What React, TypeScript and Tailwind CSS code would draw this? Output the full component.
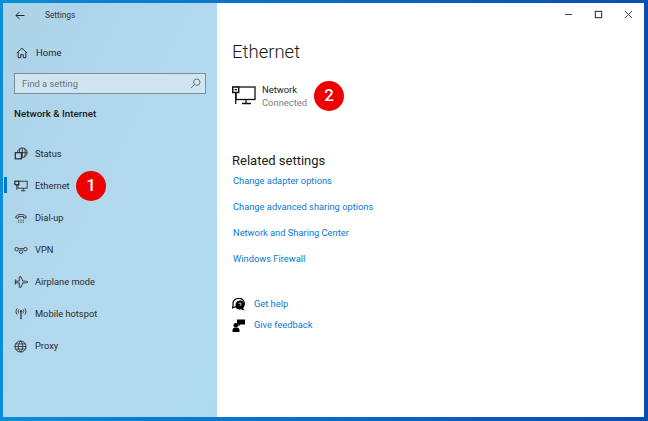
import React from "react";

const I = ({ children, w = 14, h = 14, sw = 1 }: { children: React.ReactNode; w?: number; h?: number; sw?: number }) => (
  <svg width={w} height={h} viewBox="0 0 16 16" fill="none" stroke="currentColor" strokeWidth={sw} className="shrink-0">
    {children}
  </svg>
);

const items: { label: string; icon: React.ReactNode; active?: boolean; badge?: boolean }[] = [
  {
    label: "Status",
    icon: (
      <I>
        <circle cx="9.500" cy="6.500" r="5.500" />
        <path d="M4 6.500h11M9.500 1v11M7 1.700c-1.200 3-1.200 6.600 0 9.600M12 1.700c1.200 3 1.200 6.600 0 9.600" />
        <rect x="1.500" y="6.500" width="7" height="7" fill="#b0d8ee" strokeWidth="1.400" />
      </I>
    ),
  },
  {
    label: "Ethernet",
    active: true,
    badge: true,
    icon: (
      <I>
        <rect x="4.500" y="2.500" width="10.500" height="8" />
        <path d="M8 13.500h5M10.500 10.500v3" />
        <rect x="1" y="2.500" width="4.500" height="4" fill="#b0d8ee" strokeWidth="1.400" />
        <path d="M3.200 6.500v6" />
      </I>
    ),
  },
  {
    label: "Dial-up",
    icon: (
      <I>
        <path d="M2 7c0-4 12-4 12 0v1h-3V6.400H5V8H2z" />
        <path d="M5 10.500h1M7.500 10.500h1M10 10.500h1M5 12.700h1M7.500 12.700h1M10 12.700h1" strokeWidth="1.400" />
      </I>
    ),
  },
  {
    label: "VPN",
    icon: (
      <I>
        <circle cx="3" cy="7" r="2" />
        <circle cx="13" cy="7" r="2" />
        <circle cx="8" cy="10" r="2" />
        <path d="M5 6.500h6" />
      </I>
    ),
  },
  {
    label: "Airplane mode",
    icon: (
      <I>
        <path d="M2 7h4V2h2l2 5h3.500c1.500 0 2.500 1 2.500 1s-1 1-2.500 1H10l-2 5H6V9H2z" />
        <path d="M1.500 5v6" />
      </I>
    ),
  },
  {
    label: "Mobile hotspot",
    icon: (
      <I>
        <path d="M8 6v8" strokeWidth="1.400" />
        <circle cx="8" cy="5" r="0.900" fill="currentColor" />
        <path d="M5.600 2.800c-1 1.300-1 3.200 0 4.500M10.400 2.800c1 1.300 1 3.200 0 4.500M3.600 1.500c-1.700 2.200-1.700 5 0 7.200M12.400 1.500c1.700 2.200 1.700 5 0 7.200" />
      </I>
    ),
  },
  {
    label: "Proxy",
    icon: (
      <I w={13} h={13}>
        <circle cx="8" cy="8" r="6.800" strokeWidth="1.200" />
        <path d="M1.200 8h13.600M2 4.800h12M2 11.200h12M8 1.200c-3.600 3.900-3.600 9.700 0 13.600M8 1.200c3.600 3.900 3.600 9.700 0 13.600" />
      </I>
    ),
  },
];

const Badge = ({ n }: { n: string }) => (
  <span className="absolute flex h-[30px] w-[30px] items-center justify-center rounded-full bg-[#ee0000] text-[17px] font-medium text-white">
    {n}
  </span>
);

export default function App() {
  return (
    <div
      className="flex h-[421px] w-[648px] overflow-hidden bg-gradient-to-r from-[#0a8ed8] via-[#0a6ac8] to-[#0a4cb4] pb-[4px] pl-[3px] pr-[4px] pt-[3px] text-[#1c1c1c]"
      style={{ fontFamily: 'Roboto,"Open Sans",sans-serif' }}
    >
      <aside className="flex w-[214px] shrink-0 flex-col bg-gradient-to-br from-[#acd2e8] via-[#b2d9ee] to-[#aedaf0]">
        <div className="flex h-[24px] items-center pl-[12px]">
          <svg width="10" height="9" viewBox="0 0 11 10" fill="none" stroke="#222" strokeWidth="1.100">
            <path d="M10.500 5H1M5 1 1 5l4 4" />
          </svg>
          <span className="ml-[20px] text-[8.300px] text-[#333]">Settings</span>
        </div>
        <div className="mt-[14px] flex h-[24px] items-center pl-[12.500px] text-[#222]">
          <svg width="12" height="12" viewBox="0 0 14 14" fill="none" stroke="currentColor" strokeWidth="1.100">
            <path d="M1 7 7 1.500 13 7M2.500 6v6.500h3V9h3v3.500h3V6" />
          </svg>
          <span className="ml-[8.500px] text-[9.500px]">Home</span>
        </div>
        <div className="ml-[11px] mt-[8px] flex h-[21px] w-[192px] items-center justify-between border-[1.500px] border-[#7b8e9b] bg-[#cfe6f2] pl-[7px] pr-[4px]">
          <span className="text-[9.300px] text-[#66747e]">Find a setting</span>
          <svg width="11" height="11" viewBox="0 0 11 11" fill="none" stroke="#66747e" strokeWidth="1">
            <circle cx="6.800" cy="4.200" r="3.200" />
            <path d="M4.500 6.500 1 10" />
          </svg>
        </div>
        <div className="ml-[11px] mt-[13px] text-[9.800px] font-medium leading-[14px] text-[#1a1a1a]">Network &amp; Internet</div>
        <nav className="mt-[17px] flex flex-col">
          {items.map((it) => (
            <div key={it.label} className="relative flex h-[32px] items-center pl-[11px] text-[#2a2a2a]">
              {it.active && <span className="absolute left-[1px] top-[7px] h-[16px] w-[3px] bg-[#0078d7]" />}
              {it.icon}
              <span className="absolute left-[32px] text-[9.300px]">{it.label}</span>
              {it.badge && (
                <span className="absolute left-[73px] top-[1px]">
                  <Badge n="1" />
                </span>
              )}
            </div>
          ))}
        </nav>
      </aside>

      <main className="relative flex flex-1 flex-col bg-white pl-[15px]">
        <div className="absolute right-[11px] top-[7px] flex items-center gap-[21px] text-[#333]">
          <svg width="9" height="9" viewBox="0 0 10 10" stroke="currentColor" strokeWidth="1"><path d="M1 5h8" /></svg>
          <svg width="9" height="9" viewBox="0 0 10 10" fill="none" stroke="currentColor" strokeWidth="1.200"><rect x="1.500" y="1.500" width="7" height="7" /></svg>
          <svg width="9" height="9" viewBox="0 0 10 10" stroke="currentColor" strokeWidth="1"><path d="M1 1l8 8M9 1 1 9" /></svg>
        </div>
        <h1 className="mt-[36px] text-[18.500px] leading-[26px] font-light text-[#1a1a1a]">Ethernet</h1>
        <div className="relative mt-[16px] flex h-[30px] items-center">
          <svg width="24" height="20" viewBox="0 0 24 20" fill="none" stroke="#111" strokeWidth="1.300" className="shrink-0">
            <rect x="4" y="1" width="19" height="12.500" />
            <rect x="0.700" y="1" width="6" height="5.500" fill="#fff" strokeWidth="1.500" />
            <path d="M3.700 6.500V18M10 17.500h9M14 13.500v4M2.500 3.700h2.500" />
          </svg>
          <div className="ml-[6px] flex flex-col">
            <span className="text-[9.400px] leading-[13px] text-[#222]">Network</span>
            <span className="text-[9.400px] leading-[13px] text-[#808080]">Connected</span>
          </div>
          <span className="absolute left-[82px] top-[0px]">
            <Badge n="2" />
          </span>
        </div>
        <h2 className="mt-[40px] text-[13px] leading-[20px] text-[#1a1a1a]">Related settings</h2>
        <div className="flex flex-col text-[9.300px] text-[#0a78d4]">
          {["Change adapter options", "Change advanced sharing options", "Network and Sharing Center", "Windows Firewall"].map((t) => (
            <span key={t} className="h-[26px] pl-[1px] leading-[20px]">{t}</span>
          ))}
        </div>
        <div className="mt-[22px] flex flex-col gap-[7px] text-[9.300px] text-[#0a78d4]">
          <div className="flex h-[14px] items-center">
            <svg width="14" height="13" viewBox="0 0 14 13" className="shrink-0 text-black" fill="currentColor">
              <path d="M6 0.500a5 5 0 0 0-4.800 6.300L0.500 10l3-1.300A5 5 0 1 0 6 0.500z" fillOpacity="0" stroke="currentColor" strokeWidth="1.200" />
              <circle cx="8" cy="7" r="4.500" />
              <path d="M11 10l1.500 2.500-3-1z" />
              <path d="M6.800 5.700c.3-1 2.400-1 2.400.3 0 .9-1.200.9-1.200 1.800M8 9h.01" stroke="#fff" strokeWidth="0.900" fill="none" />
            </svg>
            <span className="ml-[8px]">Get help</span>
          </div>
          <div className="flex h-[14px] items-center">
            <svg width="14" height="13" viewBox="0 0 14 13" className="shrink-0 text-black" fill="currentColor">
              <path d="M5 0.500h8v5H8.500L6.500 7.500v-2H5z" />
              <circle cx="3.800" cy="6.200" r="2.300" />
              <path d="M0.500 13v-1.500a3 3 0 0 1 3-3h1a3 3 0 0 1 3 3V13z" />
            </svg>
            <span className="ml-[8px]">Give feedback</span>
          </div>
        </div>
      </main>
    </div>
  );
}
